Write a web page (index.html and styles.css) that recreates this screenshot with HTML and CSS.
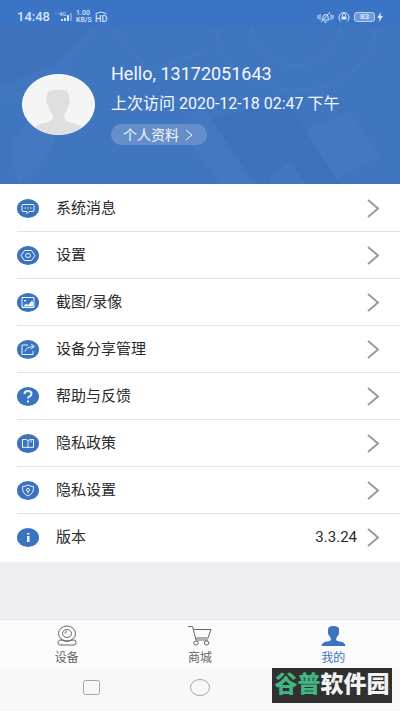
FILE: index.html
```html
<!DOCTYPE html>
<html lang="zh-CN">
<head>
<meta charset="utf-8">
<meta name="viewport" content="width=device-width, initial-scale=1">
<title>我的</title>
<link rel="stylesheet" href="styles.css">
</head>
<body>
<div class="status">
  <span class="time">14:48</span>
  <svg class="signal" viewBox="0 0 19 14" width="19" height="14" aria-hidden="true"><path d="M1 3h1M3 3h2" class="dim"/><path d="M8 11V9M11 11V8M14 11V5" class="bar"/><path d="M17 11V3" class="bar dim"/><text x="5" y="6">4G</text></svg>
  <span class="rate"><span>1.00</span><span>KB/S</span></span>
  <span class="hd"><svg viewBox="0 0 12 4" width="12" height="4" aria-hidden="true"><path d="M1 3.500V2.500Q6-.5 11 2.500V3.500"/></svg><span>HD</span></span>
  <span class="status-right">
    <svg viewBox="0 0 17 12" width="17" height="12" aria-hidden="true"><path d="M1 4v4M3 3v6M14 3v6M16 4v4M5 9h7l-1-2V5a3 3 0 0 0-5 0v2zM7 11h3M4 11l9-10"/></svg>
    <svg viewBox="0 0 12 12" width="12" height="12" aria-hidden="true"><path d="M3 10.500A5 5 0 1 1 9 10.500M4.500 5.500V4a1.500 1.500 0 0 1 3 0v1.500"/><path class="solid" d="M3.500 5.500h5v3h-5z"/></svg>
    <span class="battery">83</span>
    <svg class="bolt" viewBox="0 0 6 10" width="6" height="10" aria-hidden="true"><path class="solid" d="M4 0 0 6h2.500L2 10l4-6H3.500z"/></svg>
  </span>
</div>
<header class="profile">
  <svg class="art" viewBox="0 0 400 158" preserveAspectRatio="none" aria-hidden="true">
    <path class="shade" d="M0 0h90L55 38 0 60zM205 96l80-25 55 87h-88z"/>
    <path class="light" d="m306 105 43-20 32 46-45 21zM202 80l54 78h-36l-40-55zM272 148l18-13 15 23h-35zM20 158Q-5 110 45 85 75 110 20 158"/>
    <path class="line" d="M0 62Q55 60 96 0M0 75 70 45M216 0a80 64 0 0 0 160 0M252 0a44 40 0 0 0 88 0M110 0l40 45 55-20"/>
  </svg>
  <svg class="avatar" viewBox="0 0 73 61" aria-hidden="true">
    <defs><clipPath id="face"><ellipse cx="36.500" cy="30.500" rx="36" ry="30"/></clipPath></defs>
    <ellipse cx="36.500" cy="30.500" rx="36" ry="30" class="disc"/>
    <path clip-path="url(#face)" class="person" d="M25 21c0-4 4-5 9-5 8-1 14 0 13 7l1 5-2 5c-1 4-3 6-4 8 0 5 3 7 8 8 6 1 9 3 11 7v5H12v-5c2-4 5-6 11-7 5-1 8-3 8-8-2-2-4-4-4-8l-3-5z"/>
  </svg>
  <div class="info">
    <p class="hello">Hello, 13172051643</p>
    <p class="visit">上次访问 2020-12-18 02:47 下午</p>
    <button class="chip" type="button">个人资料 <svg viewBox="0 0 8 12" width="8" height="12" aria-hidden="true"><path d="m1 1 6 5-6 5"/></svg></button>
  </div>
</header>
<main>
  <nav class="menu">
    <a href="#messages"><svg class="icon" viewBox="0 0 22 19"><ellipse cx="11" cy="9.500" rx="11" ry="9.500"/><path d="M6 5.500h10q1 0 1 1v5q0 1-1 1h-4l-2 2v-2H6q-1 0-1-1v-5q0-1 1-1z"/><path d="M7.500 9h1.500M10.300 9h1.500M13 9h1.500"/></svg><span>系统消息</span><svg class="arrow" viewBox="0 0 12 19"><path d="m1 1 10 8.500L1 18"/></svg></a>
    <a href="#settings"><svg class="icon" viewBox="0 0 22 19"><ellipse cx="11" cy="9.500" rx="11" ry="9.500"/><path d="M7.500 4.500h7l3.500 5-3.500 5h-7l-3.500-5z"/><ellipse cx="11" cy="9.500" rx="2.500" ry="2"/></svg><span>设置</span><svg class="arrow" viewBox="0 0 12 19"><path d="m1 1 10 8.500L1 18"/></svg></a>
    <a href="#captures"><svg class="icon" viewBox="0 0 22 19"><ellipse cx="11" cy="9.500" rx="11" ry="9.500"/><path d="M5 4.500h12v10H5z"/><path class="solid" d="m6 13.500 3-3 2 1.500 4-4.500 1.500 2v4zM7 7h2v1.500H7z"/></svg><span>截图/录像</span><svg class="arrow" viewBox="0 0 12 19"><path d="m1 1 10 8.500L1 18"/></svg></a>
    <a href="#sharing"><svg class="icon" viewBox="0 0 22 19"><ellipse cx="11" cy="9.500" rx="11" ry="9.500"/><path d="M11 5H5v9.500h11V11M8 11.500Q9 7 16.500 6.500M14 4l3.500 2.500L14 9"/></svg><span>设备分享管理</span><svg class="arrow" viewBox="0 0 12 19"><path d="m1 1 10 8.500L1 18"/></svg></a>
    <a href="#help"><svg class="icon" viewBox="0 0 22 19"><ellipse cx="11" cy="9.500" rx="11" ry="9.500"/><path class="thick" d="M7.500 7Q7.500 4 11 4t3.500 2.800Q14.500 8.500 12.500 9.300 11 10 11 11.500M11 13.500v2"/></svg><span>帮助与反馈</span><svg class="arrow" viewBox="0 0 12 19"><path d="m1 1 10 8.500L1 18"/></svg></a>
    <a href="#policy"><svg class="icon" viewBox="0 0 22 19"><ellipse cx="11" cy="9.500" rx="11" ry="9.500"/><path d="M11 6.500Q9.500 5 5.500 5.500v8q4-.5 5.500 0 1.500-.5 5.500 0v-8Q12.500 5 11 6.500v7M14 5.500v3"/></svg><span>隐私政策</span><svg class="arrow" viewBox="0 0 12 19"><path d="m1 1 10 8.500L1 18"/></svg></a>
    <a href="#privacy"><svg class="icon" viewBox="0 0 22 19"><ellipse cx="11" cy="9.500" rx="11" ry="9.500"/><path d="M11 4Q8.500 5.500 5.500 5.500q-.5 7 5.500 9.500 6-2.500 5.500-9.500Q13.500 5.500 11 4z"/><ellipse cx="11" cy="8.800" rx="1.500" ry="1.500"/><path d="M11 10v2.500"/></svg><span>隐私设置</span><svg class="arrow" viewBox="0 0 12 19"><path d="m1 1 10 8.500L1 18"/></svg></a>
    <a href="#version"><svg class="icon" viewBox="0 0 22 19"><ellipse cx="11" cy="9.500" rx="11" ry="9.500"/><path class="solid" d="M10 8h2.500v6H10zM10 5h2.500v1.500H10z"/></svg><span>版本</span><span class="value">3.3.24</span><svg class="arrow" viewBox="0 0 12 19"><path d="m1 1 10 8.500L1 18"/></svg></a>
  </nav>
</main>
<nav class="tabs">
  <a href="#devices"><svg viewBox="0 0 20 22" width="20" height="22" aria-hidden="true"><ellipse cx="10" cy="8.500" rx="8.500" ry="7.500"/><ellipse cx="10" cy="8.500" rx="4.500" ry="4"/><path d="M8 8.500Q8 6.500 10 6.500M4 15H3q-2 .5-2 2.500t2 2.500h14q2 0 2-2.500T17 15h-1Q10 18 4 15z"/></svg>设备</a>
  <a href="#mall"><svg viewBox="0 0 24 22" width="24" height="22" aria-hidden="true"><path d="M0 1.500h4.500L8 15h12M5.500 4.500H23L20 13H7.500"/><ellipse cx="8" cy="18" rx="2.300" ry="2"/><ellipse cx="18.500" cy="18" rx="2.300" ry="2"/></svg>商城</a>
  <a href="#me" class="active" aria-current="page"><svg viewBox="0 0 25 22" width="25" height="22" aria-hidden="true"><path d="M7 5Q7 1 12 1q7 0 6 5v2q0 2-1.500 3L15 14q0 2 4 2.500 5 .5 5.500 4.500H.5Q1 17 6 16.500q4-.5 4-2.500l-1.500-3Q7 10 7 8z"/></svg>我的</a>
</nav>
<footer class="system">
  <button type="button" aria-label="最近任务"><svg viewBox="0 0 17 15" width="17" height="15"><rect x=".5" y=".5" width="16" height="14" rx="2"/></svg></button>
  <button type="button" aria-label="主屏幕"><svg viewBox="0 0 20 17" width="20" height="17"><ellipse cx="10" cy="8.500" rx="9.500" ry="8"/></svg></button>
  <span class="slot"></span>
</footer>
<div class="mark"><span>谷普</span>软件园</div>
</body>
</html>
```
FILE: styles.css
```css
* { box-sizing: border-box; }

body {
  margin: 0;
  min-height: 100vh;
  display: flex;
  flex-direction: column;
  position: relative;
  background: #eeeef3;
  color: #2b2b2b;
  font-family: Roboto, "Noto Sans CJK SC", sans-serif;
  font-size: 15px;
}

a { color: inherit; text-decoration: none; }
p { margin: 0; }
svg { flex: none; fill: none; stroke: currentColor; }
button { font: inherit; color: inherit; border: 0; background: none; padding: 0; }
.solid { fill: currentColor; stroke: none; }

.status {
  display: flex;
  align-items: center;
  height: 26px;
  padding: 8px 17px 0;
  background: #3b73c5;
  color: #d5e6ff;
}
.time { width: 37px; font-size: 13px; font-weight: 500; line-height: 18px; }
.signal text { font-size: 6px; fill: currentColor; stroke: none; }
.signal .bar { stroke-width: 2; }
.dim { opacity: 0.4; }
.rate {
  display: flex;
  flex-direction: column;
  margin-left: 3px;
  width: 19px;
  font-size: 7px;
  font-weight: 500;
  line-height: 7px;
}
.hd {
  display: flex;
  flex-direction: column;
  align-items: center;
  font-size: 9px;
  font-weight: 500;
  line-height: 8px;
}
.status-right { display: flex; align-items: center; gap: 4px; margin-left: auto; }
.battery {
  width: 21px;
  border: 1px solid #b9d1f3;
  border-radius: 3px;
  background: #6f9ad8;
  font-size: 8px;
  line-height: 8px;
  font-weight: 700;
  text-align: center;
}
.battery + svg { margin-left: -2px; }

.profile {
  display: flex;
  gap: 16px;
  position: relative;
  min-height: 158px;
  padding: 38px 22px 38px;
  background: #4076bf;
  color: #f3f8ff;
}
.art { position: absolute; inset: 0; width: 100%; height: 100%; stroke: none; }
.shade { fill: #3b70ba; opacity: 0.4; }
.light { fill: #4b80c8; opacity: 0.4; }
.art .line { stroke: #4b80c8; stroke-width: 2; opacity: 0.3; }
.avatar { position: relative; width: 73px; height: 61px; margin-top: 10px; stroke: none; }
.disc { fill: #f5f5f5; stroke: #ffffff; }
.person { fill: #dfdfdf; }
.info { position: relative; }
.hello { font-size: 18px; line-height: 20px; }
.visit { margin-top: 10px; font-size: 16px; line-height: 20px; white-space: nowrap; }
.chip {
  display: flex;
  align-items: center;
  gap: 6px;
  height: 21px;
  margin-top: 10px;
  padding: 0 14px 0 12px;
  border-radius: 11px;
  background: #668fc9;
  font-size: 14px;
  line-height: 20px;
}

.menu { padding: 1px 0; background: #ffffff; }
.menu a {
  display: flex;
  align-items: center;
  height: 47px;
  margin-left: 17px;
  padding-right: 21px;
  border-bottom: 1px solid #e3e3e5;
  line-height: 20px;
}
.menu a:last-child { border-color: transparent; }
.icon { width: 22px; height: 19px; margin-right: 17px; stroke: #e6f4ff; color: #e6f4ff; }
.icon > ellipse:first-child { fill: #3b73bf; stroke: none; }
.icon .thick { stroke-width: 2; }
.arrow { width: 12px; height: 19px; margin-left: auto; stroke: #9a9a9a; stroke-width: 2; }
.value { margin-left: auto; }
.value + .arrow { margin-left: 10px; }

main { flex: 1; }
.tabs {
  display: flex;
  height: 51px;
  border-top: 1px solid #e3e3e6;
  background: #fbfbfb;
  color: #666666;
}
.tabs a {
  flex: 1;
  display: flex;
  flex-direction: column;
  align-items: center;
  gap: 1px;
  padding-top: 5px;
  font-size: 12px;
  line-height: 20px;
}
.tabs .active { color: #3b73bf; }
.active svg { fill: currentColor; stroke: none; }

.system {
  display: flex;
  justify-content: center;
  align-items: center;
  gap: 90px;
  height: 41px;
  padding-bottom: 6px;
  background: #f8f8f8;
  color: #a5a5a5;
}
.system svg { display: block; }
.slot { width: 17px; }

.mark {
  position: absolute;
  right: 8px;
  bottom: 8px;
  width: 120px;
  height: 35px;
  background: #303030;
  color: #f2f2f2;
  font-size: 23px;
  font-weight: 900;
  line-height: 34px;
  text-align: center;
  white-space: nowrap;
}
.mark span { color: #42b582; }
```
